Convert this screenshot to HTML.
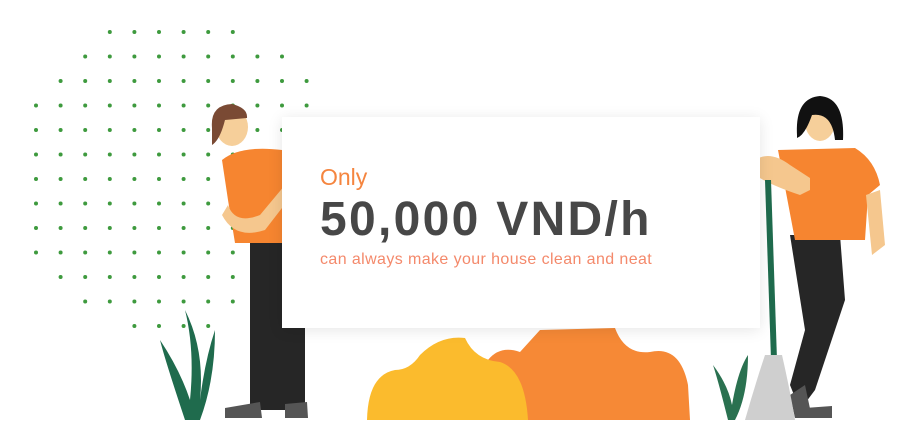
<!DOCTYPE html>
<html><head><meta charset="utf-8"><style>
html,body{margin:0;padding:0;background:#fff;width:911px;height:424px;overflow:hidden;position:relative;font-family:"Liberation Sans",sans-serif}
svg{position:absolute;left:0;top:0}
.card{position:absolute;left:282px;top:117px;width:478px;height:211px;background:#fff;box-shadow:0 2px 14px rgba(0,0,0,0.10)}
.t1{position:absolute;left:38px;top:47px;font-size:23px;color:#f5853f}
.t2{position:absolute;left:38px;top:75px;font-size:48px;line-height:55px;font-weight:bold;color:#474747;letter-spacing:2.3px;white-space:nowrap}
.t3{position:absolute;left:38px;top:134px;font-size:16px;color:#f4896b;letter-spacing:0.4px;white-space:nowrap}
</style></head><body>
<svg width="911" height="424" viewBox="0 0 911 424">
<g fill="#3e9a3e" id="dots"></g>
<path d="M480,420 L488,360 Q500,345 520,352 L540,330 L615,328 Q625,355 650,352 Q680,345 688,385 L690,420Z" fill="#f68936"/>
<path d="M367,420 Q368,375 395,370 Q410,370 420,355 Q440,335 465,338 Q475,360 500,362 Q525,370 528,420Z" fill="#fbbb2d"/>
<path d="M185,420 Q165,360 160,340 Q180,370 190,400 Q195,350 185,310 Q205,350 200,400 Q205,360 215,330 Q215,380 200,420Z" fill="#1f6b4d"/>
<path d="M728,420 Q718,380 713,365 Q728,385 732,405 Q738,370 748,355 Q748,395 735,420Z" fill="#2a7150"/>
<rect x="250" y="240" width="55" height="170" fill="#262626"/>
<path d="M225,408 L260,402 L262,418 L225,418Z M285,404 L307,402 L308,418 L285,418Z" fill="#555"/>
<path d="M222,160 Q240,145 282,150 L282,243 L235,243 L228,200 Z" fill="#f68530"/>
<path d="M228,205 Q235,225 260,215 L285,185 L292,195 L265,230 Q235,240 222,215Z" fill="#f5c78e"/>
<ellipse cx="232" cy="127" rx="16" ry="19" fill="#f6cf9a"/>
<path d="M212,128 Q210,105 232,104 Q248,108 247,118 L225,120 Q220,140 212,145Z" fill="#7a4a34"/>
<path d="M790,235 L840,235 L845,300 L815,390 L800,410 L790,385 L805,330Z" fill="#262626"/>
<path d="M790,395 L805,385 L812,418 L795,418Z M805,408 L832,406 L832,418 L805,418Z" fill="#555"/>
<path d="M778,150 L855,148 Q875,160 880,185 L868,195 L865,240 L795,240Z" fill="#f68530"/>
<path d="M755,160 Q770,150 790,165 L810,178 L810,190 L800,195 Q770,185 755,175Z" fill="#f5c78e"/>
<path d="M866,195 L880,190 L885,245 L872,255Z" fill="#f5c78e"/>
<ellipse cx="820" cy="122" rx="15" ry="19" fill="#f6cf9a"/>
<path d="M797,135 Q795,98 820,96 Q845,98 843,140 L835,140 Q832,112 812,115 Q805,135 797,138Z" fill="#111"/>
<path d="M765,180 L771,180 L777,360 L771,360Z" fill="#1f6b4d"/>
<path d="M765,355 L782,355 Q790,390 795,420 L745,420 Q755,385 765,355Z" fill="#cfcfcf"/>
</svg>
<div class="card">
<div class="t1">Only</div>
<div class="t2">50,000 VND/h</div>
<div class="t3">can always make your house clean and neat</div>
</div>
<script>
var g=document.getElementById('dots'),ranges=[[3,8],[2,10],[1,11],[0,11],[0,11],[0,11],[0,11],[0,11],[0,11],[0,11],[1,8],[2,8],[4,7]],s='';
for(var r=0;r<ranges.length;r++){for(var c=ranges[r][0];c<=ranges[r][1];c++){s+='<circle cx="'+(36+24.6*c).toFixed(1)+'" cy="'+(32+24.5*r).toFixed(1)+'" r="2"/>';}}
g.innerHTML=s;
</script>
</body></html>
